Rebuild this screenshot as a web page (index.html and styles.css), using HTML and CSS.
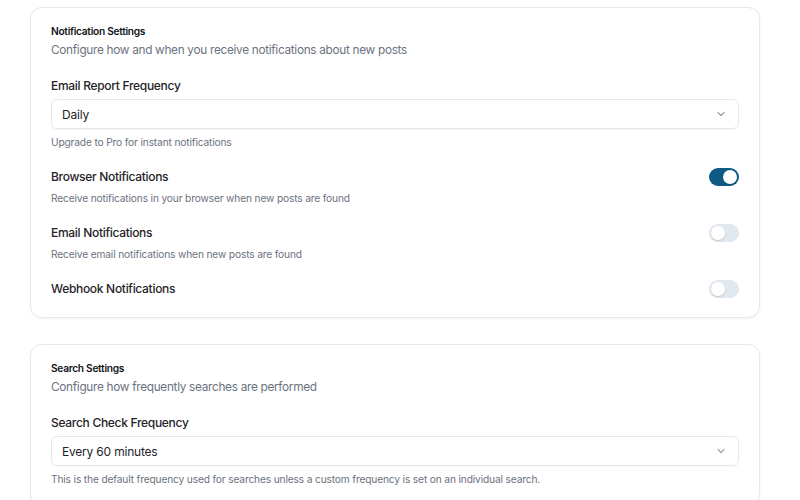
FILE: index.html
```html
<!DOCTYPE html>
<html>
<head>
<meta charset="utf-8">
<link rel="stylesheet" href="styles.css">
</head>
<body>
<div class="page">
  <section class="card">
    <h2 class="card-title">Notification Settings</h2>
    <p class="card-desc">Configure how and when you receive notifications about new posts</p>
    <div class="field">
      <label class="label">Email Report Frequency</label>
      <div class="select">
        <span>Daily</span>
        <svg class="chev" width="10" height="10" viewBox="0 0 10 10"><path d="M2 3.5 L5 6.5 L8 3.5" fill="none" stroke="#9ca3af" stroke-width="1.2" stroke-linecap="round" stroke-linejoin="round"/></svg>
      </div>
      <p class="help">Upgrade to Pro for instant notifications</p>
    </div>
    <div class="toggle-row">
      <div class="toggle-text">
        <div class="label">Browser Notifications</div>
        <p class="help tight">Receive notifications in your browser when new posts are found</p>
      </div>
      <span class="switch on"><span class="knob"></span></span>
    </div>
    <div class="toggle-row">
      <div class="toggle-text">
        <div class="label">Email Notifications</div>
        <p class="help tight">Receive email notifications when new posts are found</p>
      </div>
      <span class="switch"><span class="knob"></span></span>
    </div>
    <div class="toggle-row">
      <div class="toggle-text">
        <div class="label">Webhook Notifications</div>
      </div>
      <span class="switch"><span class="knob"></span></span>
    </div>
  </section>

  <section class="card">
    <h2 class="card-title">Search Settings</h2>
    <p class="card-desc">Configure how frequently searches are performed</p>
    <div class="field">
      <label class="label">Search Check Frequency</label>
      <div class="select">
        <span>Every 60 minutes</span>
        <svg class="chev" width="10" height="10" viewBox="0 0 10 10"><path d="M2 3.5 L5 6.5 L8 3.5" fill="none" stroke="#9ca3af" stroke-width="1.2" stroke-linecap="round" stroke-linejoin="round"/></svg>
      </div>
      <p class="help">This is the default frequency used for searches unless a custom frequency is set on an individual search.</p>
    </div>
  </section>
</div>
</body>
</html>
```

FILE: styles.css
```css
* { box-sizing: border-box; }
html, body {
  margin: 0;
  padding: 0;
  background: #ffffff;
  font-family: Inter, "Noto Sans", "Liberation Sans", sans-serif;
  color: #1f2328;
}
.page {
  padding: 7px 0 0 30px;
  width: 760px;
  display: flex;
  flex-direction: column;
  gap: 26px;
}
.card {
  width: 730px;
  border: 1px solid #e6e7ea;
  border-radius: 12px;
  box-shadow: 0 1px 3px rgba(0,0,0,0.05);
  padding: 16px 20px 18px 20px;
  background: #fff;
}
.card-title {
  margin: 0;
  font-size: 10.2px;
  line-height: 14px;
  font-weight: 600;
  letter-spacing: -0.3px;
  color: #111418;
}
.card-desc {
  margin: 3px 0 0 0;
  font-size: 11.8px;
  line-height: 18px;
  letter-spacing: -0.3px;
  color: #6b7280;
}
.field { margin-top: 17px; }
.label {
  display: block;
  font-size: 12px;
  line-height: 20px;
  font-weight: 500;
  letter-spacing: -0.3px;
  color: #1f2328;
}
.select {
  margin-top: 3px;
  height: 30px;
  border: 1px solid #e6e7ea;
  border-radius: 6px;
  box-shadow: 0 1px 2px rgba(0,0,0,0.04);
  display: flex;
  align-items: center;
  justify-content: space-between;
  padding: 0 12px 0 10px;
  font-size: 12px;
  letter-spacing: -0.2px;
  color: #1f2328;
}
.help {
  margin: 5px 0 0 0;
  font-size: 10.2px;
  line-height: 16px;
  letter-spacing: -0.15px;
  color: #6b7280;
}
.help.tight { margin-top: 3px; }
.toggle-row {
  margin-top: 17px;
  display: flex;
  justify-content: space-between;
  align-items: flex-start;
}
.switch {
  margin-top: 1px;
  width: 30px;
  height: 18px;
  border-radius: 9px;
  background: #e2e8f0;
  position: relative;
  flex: none;
}
.switch .knob {
  position: absolute;
  top: 2px;
  left: 2px;
  width: 14px;
  height: 14px;
  border-radius: 50%;
  background: #fff;
  box-shadow: 0 1px 2px rgba(0,0,0,0.15);
}
.switch.on { background: #0e5a85; }
.switch.on .knob { left: 14px; }
```
